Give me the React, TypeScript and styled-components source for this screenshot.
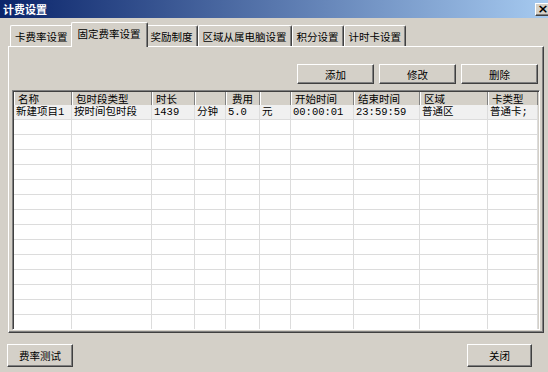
import styled, { createGlobalStyle } from "styled-components";

const GlobalStyle = createGlobalStyle`
  html, body {
    margin: 0;
    padding: 0;
    background: #d4d0c8;
  }
  body {
    font-family: "Noto Sans CJK SC", sans-serif;
  }
`;

type Column = { title: string; width: number; center?: boolean };

const columns: Column[] = [
  { title: "名称", width: 58 },
  { title: "包时段类型", width: 80 },
  { title: "时长", width: 43 },
  { title: "", width: 31 },
  { title: "费用", width: 34, center: true },
  { title: "", width: 31 },
  { title: "开始时间", width: 63 },
  { title: "结束时间", width: 66 },
  { title: "区域", width: 68 },
  { title: "卡类型", width: 50 },
];

const rows: string[][] = [
  ["新建项目1", "按时间包时段", "1439", "分钟", "5.0", "元", "00:00:01", "23:59:59", "普通区", "普通卡;"],
];

const tabs = ["卡费率设置", "固定费率设置", "奖励制度", "区域从属电脑设置", "积分设置", "计时卡设置"];
const EMPTY_ROWS = 15;

export default function App() {
  const filler = Array.from({ length: EMPTY_ROWS }, () => columns.map(() => ""));
  const allRows = [...rows, ...filler];

  return (
    <>
      <GlobalStyle />
      <Window>
        <TitleBar>
          <Title>计费设置</Title>
          <CloseButton>×</CloseButton>
        </TitleBar>
        <Content>
          <TabStrip>
            {tabs.map((t, i) => (
              <Tab key={t} $active={i === 1}>
                {t}
              </Tab>
            ))}
          </TabStrip>
          <Panel>
            <ButtonRow>
              <ActionButton>添加</ActionButton>
              <ActionButton>修改</ActionButton>
              <ActionButton>删除</ActionButton>
            </ButtonRow>
            <ListView>
              <HeaderRow>
                {columns.map((c, i) => (
                  <HeaderCell key={i} $width={c.width} $center={c.center}>
                    {c.title}
                  </HeaderCell>
                ))}
              </HeaderRow>
              {allRows.map((r, ri) => (
                <Row key={ri} $shaded={ri === 0}>
                  {r.map((v, ci) => (
                    <Cell key={ci} $width={columns[ci].width}>
                      {v}
                    </Cell>
                  ))}
                </Row>
              ))}
            </ListView>
          </Panel>
          <Footer>
            <FooterButton $width={66}>费率测试</FooterButton>
            <FooterButton $width={65}>关闭</FooterButton>
          </Footer>
        </Content>
      </Window>
    </>
  );
}

const Window = styled.div`
  width: 548px;
  height: 372px;
  overflow: hidden;
  background: #d4d0c8;
  display: flex;
  flex-direction: column;
`;

const TitleBar = styled.div`
  height: 18px;
  flex-shrink: 0;
  display: flex;
  align-items: center;
  justify-content: space-between;
  padding-left: 3px;
  background: linear-gradient(to right, #0a246a, #a6caf0);
`;

const Title = styled.span`
  color: #fff;
  font-weight: bold;
  font-size: 11px;
  line-height: 18px;
`;

const CloseButton = styled.div`
  width: 16px;
  height: 13px;
  margin-right: -3px;
  box-sizing: border-box;
  background: #d4d0c8;
  border: 1px solid;
  border-color: #fff #404040 #404040 #fff;
  box-shadow: inset -1px -1px #808080;
  font-family: "DejaVu Sans", sans-serif;
  font-weight: bold;
  font-size: 13px;
  line-height: 10px;
  text-align: center;
  color: #000;
`;

const Content = styled.div`
  flex: 1;
  display: flex;
  flex-direction: column;
  padding: 0 4px 0 8px;
`;

const TabStrip = styled.div`
  height: 28px;
  display: flex;
  align-items: flex-end;
  padding-left: 2px;
`;

const Tab = styled.div<{ $active?: boolean }>`
  position: relative;
  z-index: ${(p) => (p.$active ? 1 : 0)};
  box-sizing: border-box;
  height: ${(p) => (p.$active ? 25 : 21)}px;
  margin: ${(p) => (p.$active ? "0 -2px -1px" : "0")};
  padding: ${(p) => (p.$active ? "4px 6px 0" : "4px 4px 0")};
  background: #d4d0c8;
  border-top: 1px solid #fff;
  border-left: 1px solid #fff;
  border-right: 1px solid #404040;
  border-radius: 2px 2px 0 0;
  box-shadow: inset -1px 0 #808080;
  font-size: 10.5px;
  line-height: 14px;
  color: #000;
  white-space: nowrap;
`;

const Panel = styled.div`
  height: 287px;
  box-sizing: border-box;
  display: flex;
  flex-direction: column;
  border: 1px solid;
  border-color: #fff #404040 #404040 #fff;
  box-shadow: inset -1px -1px #808080;
  padding: 17px 0 2px 3px;
`;

const ButtonRow = styled.div`
  display: flex;
  justify-content: flex-end;
  gap: 5px;
  padding-right: 5px;
`;

const RaisedButton = styled.div`
  box-sizing: border-box;
  background: #d4d0c8;
  border: 1px solid;
  border-color: #fff #404040 #404040 #fff;
  box-shadow: inset -1px -1px #808080;
  display: flex;
  align-items: center;
  justify-content: center;
  font-size: 10.5px;
  color: #000;
`;

const ActionButton = styled(RaisedButton)`
  width: 77px;
  height: 20px;
`;

const ListView = styled.div`
  margin: 6px 3px 0 0;
  height: 240px;
  box-sizing: border-box;
  overflow: hidden;
  background: #fff;
  border: 1px solid;
  border-color: #808080 #fff #fff #808080;
  box-shadow: inset 1px 1px #404040, inset -1px -1px #d4d0c8;
  padding: 1px;
`;

const HeaderRow = styled.div`
  display: flex;
  height: 13px;
  background: #d4d0c8;
`;

const HeaderCell = styled.div<{ $width: number; $center?: boolean }>`
  width: ${(p) => p.$width}px;
  flex-shrink: 0;
  box-sizing: border-box;
  border-right: 1px solid #808080;
  box-shadow: inset 1px 0 #fff;
  padding: 0 ${(p) => (p.$center ? "0" : "4px")};
  text-align: ${(p) => (p.$center ? "center" : "left")};
  font-size: 10.5px;
  line-height: 13px;
  color: #000;
  white-space: nowrap;
  overflow: hidden;
`;

const Row = styled.div<{ $shaded?: boolean }>`
  display: flex;
  height: 15px;
  box-sizing: border-box;
  border-bottom: 1px solid #dcdcdc;
  background: ${(p) => (p.$shaded ? "#f0f0f0" : "#fff")};
`;

const Cell = styled.div<{ $width: number }>`
  width: ${(p) => p.$width}px;
  flex-shrink: 0;
  box-sizing: border-box;
  border-right: 1px solid #dcdcdc;
  padding-left: 2px;
  font-family: "Liberation Mono", "Noto Sans CJK SC", monospace;
  font-size: 10.5px;
  line-height: 14px;
  color: #000;
  white-space: nowrap;
  overflow: hidden;
`;

const Footer = styled.div`
  display: flex;
  justify-content: space-between;
  align-items: flex-start;
  padding: 11px 12px 0 0;
  margin-left: -1px;
`;

const FooterButton = styled(RaisedButton)<{ $width: number }>`
  width: ${(p) => p.$width}px;
  height: 23px;
`;
